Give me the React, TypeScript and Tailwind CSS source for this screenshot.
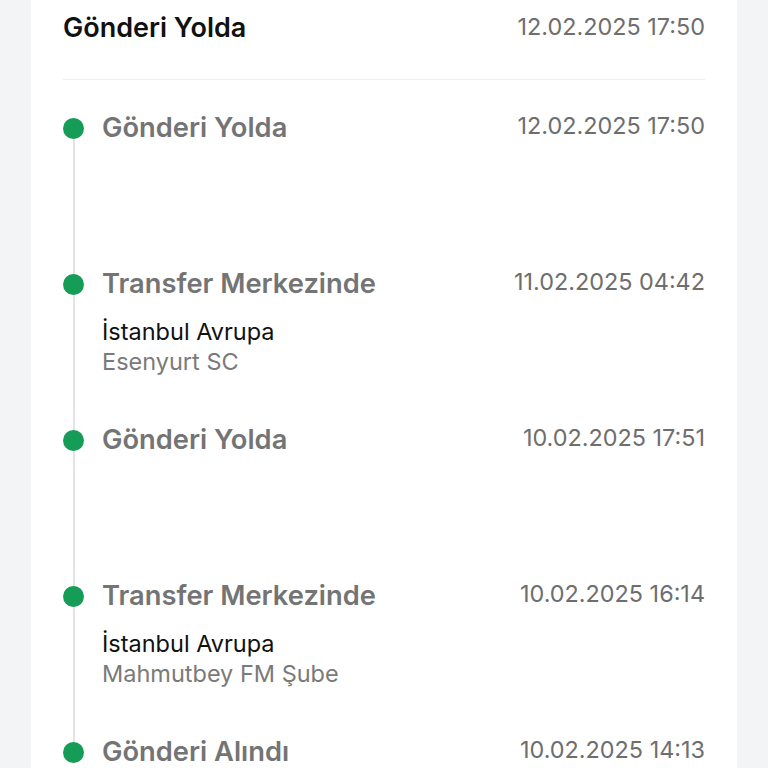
import React from "react";

type Item = { title: string; date: string; city?: string; branch?: string };

const items: Item[] = [
  { title: "Gönderi Yolda", date: "12.02.2025 17:50" },
  { title: "Transfer Merkezinde", date: "11.02.2025 04:42", city: "İstanbul Avrupa", branch: "Esenyurt SC" },
  { title: "Gönderi Yolda", date: "10.02.2025 17:51" },
  { title: "Transfer Merkezinde", date: "10.02.2025 16:14", city: "İstanbul Avrupa", branch: "Mahmutbey FM Şube" },
  { title: "Gönderi Alındı", date: "10.02.2025 14:13" },
];

export default function App() {
  return (
    <div
      className="min-h-screen bg-[#f3f4f6] px-[31px]"
      style={{ fontFamily: "Inter, 'Noto Sans', sans-serif" }}
    >
      <div className="bg-white px-8 min-h-screen">
        <div className="flex items-start justify-between pt-[12px] pb-[35px] border-b border-[#f0f0f2]">
          <div className="text-[27px] leading-[32px] font-semibold text-[#111111]">Gönderi Yolda</div>
          <div className="text-[23.4px] leading-[30px] text-[#6e6e6e]">12.02.2025 17:50</div>
        </div>
        <div className="pt-8">
          {items.map((it, i) => (
            <div key={i} className="relative flex h-[156px]">
              {i < items.length - 1 && (
                <div className="absolute left-[9.5px] top-[16px] h-[156px] w-[2px] bg-[#e3e3e3]" />
              )}
              <div className="relative z-10 flex h-[32px] w-[21px] shrink-0 items-center">
                <div className="h-[21px] w-[21px] rounded-full bg-[#159d58]" />
              </div>
              <div className="ml-[18px] flex-1 min-w-0">
                <div className="flex items-start justify-between">
                  <div className="text-[27.3px] leading-[32px] font-semibold text-[#747474]">{it.title}</div>
                  <div className="text-[23.4px] leading-[28px] text-[#6e6e6e]">{it.date}</div>
                </div>
                {it.city && (
                  <div className="mt-[17px]">
                    <div className="text-[23.5px] leading-[30px] text-[#111111]">{it.city}</div>
                    <div className="text-[23.5px] leading-[30px] text-[#7a7a7a]">{it.branch}</div>
                  </div>
                )}
              </div>
            </div>
          ))}
        </div>
      </div>
    </div>
  );
}
